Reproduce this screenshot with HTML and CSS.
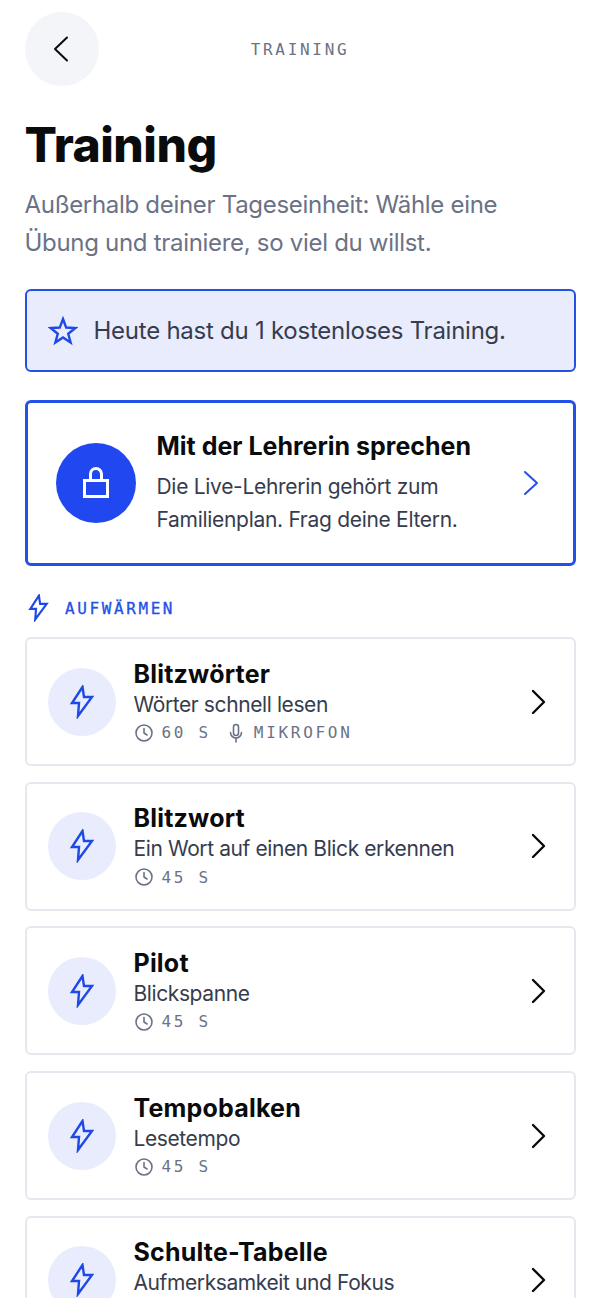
FILE: index.html
```html
<!doctype html>
<html lang="de">
 <head>
  <meta charset="UTF-8">
  <title>Training</title>
  <link rel="stylesheet" href="styles.css">
 </head>
 <body>
  <header class="topbar">
   <button class="back" type="button">
    <svg width="24" height="26" viewBox="0 0 24 26"><path d="M17 1.500 5 13l12 11.500"/></svg>
   </button>
   <span class="topbar-title">TRAINING</span>
  </header>

  <h1>Training</h1>
  <p class="intro">Außerhalb deiner Tageseinheit: Wähle eine Übung und trainiere, so viel du willst.</p>

  <div class="banner">
   <svg width="30" height="30" viewBox="0 0 30 30"><path d="M15 3l3.200 8.550 9.160.43-7.130 5.720 2.410 8.800L15 21.500l-7.640 5 2.410-8.800-7.130-5.720 9.130-.43z"/></svg>
   <span>Heute hast du 1 kostenloses Training.</span>
  </div>

  <a class="teacher">
   <span class="teacher-icon">
    <svg width="28" height="34" viewBox="0 0 28 34"><path d="M2.500 14.500h23v16h-23zM8.500 14.500V8a5.500 5.500 0 0 1 11 0v6.500"/></svg>
   </span>
   <span class="teacher-text">
    <strong>Mit der Lehrerin sprechen</strong>
    <span>Die Live-Lehrerin gehört zum Familienplan. Frag deine Eltern.</span>
   </span>
   <svg class="chev-blue" width="16" height="26" viewBox="0 0 16 26"><path d="M2 2l12 11L2 24"/></svg>
  </a>

  <div class="section-label">
   <svg width="23" height="28" viewBox="0 0 28 34"><path d="M14.500 2 4 18h7l-1 13 14-19h-8z"/></svg>
   <span>AUFWÄRMEN</span>
  </div>

  <div class="list">
   <a class="item">
    <span class="item-icon"><svg width="28" height="34" viewBox="0 0 28 34"><path d="M14.500 2 4 18h7l-1 13 14-19h-8z"/></svg></span>
    <span class="item-text">
     <strong>Blitzwörter</strong>
     <span class="item-sub">Wörter schnell lesen</span>
     <span class="meta">
      <svg width="20" height="20" viewBox="0 0 20 20"><circle cx="10" cy="10" r="8"/><path d="M10 5.500V10l3 2"/></svg><span class="meta-txt">60 S</span>
      <svg class="mic" width="20" height="20" viewBox="0 0 20 20"><rect x="7.500" y="1.500" width="5" height="11" rx="2.500"/><path d="M4.500 9.500a5.500 5.500 0 0 0 11 0M10 15v4"/></svg><span class="meta-txt">MIKROFON</span>
     </span>
    </span>
    <svg class="chev" width="16" height="26" viewBox="0 0 16 26"><path d="M3 2l11 11L3 24"/></svg>
   </a>
   <a class="item">
    <span class="item-icon"><svg width="28" height="34" viewBox="0 0 28 34"><path d="M14.500 2 4 18h7l-1 13 14-19h-8z"/></svg></span>
    <span class="item-text">
     <strong>Blitzwort</strong>
     <span class="item-sub">Ein Wort auf einen Blick erkennen</span>
     <span class="meta">
      <svg width="20" height="20" viewBox="0 0 20 20"><circle cx="10" cy="10" r="8"/><path d="M10 5.500V10l3 2"/></svg><span class="meta-txt">45 S</span>
     </span>
    </span>
    <svg class="chev" width="16" height="26" viewBox="0 0 16 26"><path d="M3 2l11 11L3 24"/></svg>
   </a>
   <a class="item">
    <span class="item-icon"><svg width="28" height="34" viewBox="0 0 28 34"><path d="M14.500 2 4 18h7l-1 13 14-19h-8z"/></svg></span>
    <span class="item-text">
     <strong>Pilot</strong>
     <span class="item-sub">Blickspanne</span>
     <span class="meta">
      <svg width="20" height="20" viewBox="0 0 20 20"><circle cx="10" cy="10" r="8"/><path d="M10 5.500V10l3 2"/></svg><span class="meta-txt">45 S</span>
     </span>
    </span>
    <svg class="chev" width="16" height="26" viewBox="0 0 16 26"><path d="M3 2l11 11L3 24"/></svg>
   </a>
   <a class="item">
    <span class="item-icon"><svg width="28" height="34" viewBox="0 0 28 34"><path d="M14.500 2 4 18h7l-1 13 14-19h-8z"/></svg></span>
    <span class="item-text">
     <strong>Tempobalken</strong>
     <span class="item-sub">Lesetempo</span>
     <span class="meta">
      <svg width="20" height="20" viewBox="0 0 20 20"><circle cx="10" cy="10" r="8"/><path d="M10 5.500V10l3 2"/></svg><span class="meta-txt">45 S</span>
     </span>
    </span>
    <svg class="chev" width="16" height="26" viewBox="0 0 16 26"><path d="M3 2l11 11L3 24"/></svg>
   </a>
   <a class="item">
    <span class="item-icon"><svg width="28" height="34" viewBox="0 0 28 34"><path d="M14.500 2 4 18h7l-1 13 14-19h-8z"/></svg></span>
    <span class="item-text">
     <strong>Schulte-Tabelle</strong>
     <span class="item-sub">Aufmerksamkeit und Fokus</span>
     <span class="meta">
      <svg width="20" height="20" viewBox="0 0 20 20"><circle cx="10" cy="10" r="8"/><path d="M10 5.500V10l3 2"/></svg><span class="meta-txt">45 S</span>
     </span>
    </span>
    <svg class="chev" width="16" height="26" viewBox="0 0 16 26"><path d="M3 2l11 11L3 24"/></svg>
   </a>
  </div>
 </body>
</html>
```

FILE: styles.css
```css
*
{
  margin: 0;
  padding: 0;
  box-sizing: border-box;
}
body
{
  padding: 12px 24.5px 0;
  background: #fff;
  color: #0a0b0d;
  font-family: 'Inter', 'Liberation Sans', sans-serif;
}
svg
{
  flex: none;
  fill: none;
  stroke-width: 2;
  stroke-linecap: round;
  stroke-linejoin: round;
}
.topbar
{
  position: relative;
  display: flex;
  align-items: center;
  justify-content: center;
  height: 74px;
}
.back
{
  position: absolute;
  left: 0;
  top: 0;
  width: 74px;
  height: 74px;
  border: none;
  border-radius: 50%;
  background: #f3f5f8;
  display: flex;
  align-items: center;
  justify-content: center;
}
.back svg
{
  stroke: #0a0b0d;
}
.topbar-title
{
  font-family: 'DejaVu Sans Mono', monospace;
  font-size: 16px;
  letter-spacing: 2.7px;
  color: #6b7285;
}
h1
{
  margin-top: 30px;
  font-size: 48px;
  line-height: 58px;
  font-weight: 800;
  letter-spacing: -0.5px;
}
.intro
{
  margin-top: 12px;
  max-width: 490px;
  font-size: 24px;
  line-height: 38px;
  letter-spacing: -0.3px;
  color: #6b7285;
}
.banner
{
  margin-top: 27px;
  height: 83px;
  display: flex;
  align-items: center;
  gap: 16px;
  padding-left: 21px;
  border: 2px solid #2450e8;
  border-radius: 6px;
  background: #e8ecfd;
  font-size: 24px;
  letter-spacing: -0.25px;
  color: #363c4e;
}
.banner svg
{
  stroke: #1f49e6;
  stroke-width: 2.4;
  stroke-linejoin: miter;
}
.teacher
{
  margin-top: 28px;
  height: 166px;
  display: flex;
  align-items: center;
  padding: 0 34px 0 28px;
  border: 3px solid #2450e8;
  border-radius: 6px;
}
.teacher-icon
{
  flex: none;
  width: 80px;
  height: 80px;
  border-radius: 50%;
  background: #2148f0;
  display: flex;
  align-items: center;
  justify-content: center;
}
.teacher-icon svg
{
  stroke: #fff;
  stroke-width: 3;
  stroke-linecap: butt;
  stroke-linejoin: miter;
}
.teacher-text
{
  flex: 1;
  padding: 0 0 2px 21px;
  display: flex;
  flex-direction: column;
}
.teacher-text strong
{
  font-size: 25px;
  line-height: 34px;
}
.teacher-text span
{
  margin-top: 7px;
  max-width: 330px;
  font-size: 21px;
  line-height: 33px;
  letter-spacing: -0.3px;
  color: #363c4e;
}
.chev-blue
{
  stroke: #2450e8;
}
.section-label
{
  margin-top: 27px;
  padding-left: 2.5px;
  height: 30px;
  display: flex;
  align-items: center;
  gap: 15px;
  color: #2450e8;
  font-family: 'DejaVu Sans Mono', monospace;
  font-size: 16px;
  letter-spacing: 2.6px;
  -webkit-text-stroke: 0.3px #2450e8;
}
.section-label svg
{
  stroke: #1f49e6;
  stroke-width: 2.6;
  stroke-linejoin: miter;
}
.list
{
  margin-top: 14px;
  display: flex;
  flex-direction: column;
  gap: 15.7px;
}
.item
{
  flex: none;
  height: 129px;
  display: flex;
  align-items: center;
  padding: 0 28px 0 21px;
  border: 2px solid #e6e8ef;
  border-radius: 6px;
}
.item-icon
{
  flex: none;
  width: 68px;
  height: 68px;
  border-radius: 50%;
  background: #e8ecfd;
  display: flex;
  align-items: center;
  justify-content: center;
}
.item-icon svg
{
  stroke: #1f49e6;
  stroke-width: 2.4;
  stroke-linejoin: miter;
}
.item-text
{
  flex: 1;
  padding-left: 18px;
  display: flex;
  flex-direction: column;
}
.item-text strong
{
  font-size: 25px;
  line-height: 32px;
  letter-spacing: 0.2px;
}
.item-sub
{
  font-size: 21px;
  line-height: 30px;
  letter-spacing: -0.4px;
  color: #363c4e;
}
.meta
{
  height: 26px;
  display: flex;
  align-items: center;
  gap: 8px;
  font-family: 'DejaVu Sans Mono', monospace;
  font-size: 16px;
  letter-spacing: 2.7px;
  color: #6b7285;
}
.meta svg
{
  stroke: #6b7285;
  stroke-width: 1.6;
}
.meta .mic
{
  margin-left: 7px;
}
.chev
{
  stroke: #0a0b0d;
  stroke-width: 2.4;
}
```
